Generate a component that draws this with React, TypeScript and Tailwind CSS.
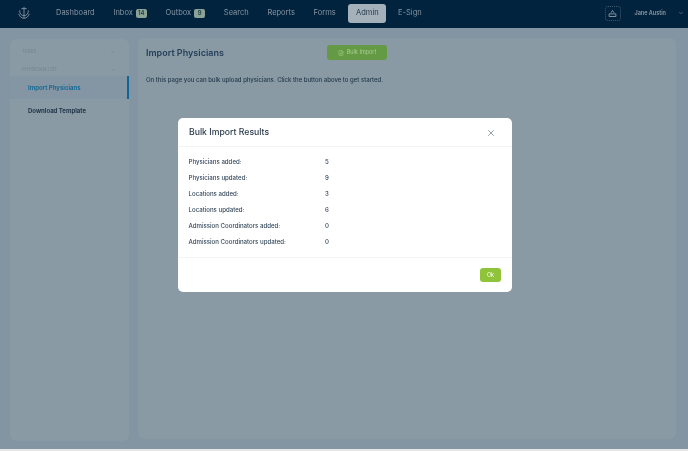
import { ChevronDown, ChevronUp, FileUp, X } from "lucide-react";

const FONT = "font-['Inter','Noto_Sans',sans-serif]";

const resultados = [
  { label: "Physicians added:", valor: 5 },
  { label: "Physicians updated:", valor: 9 },
  { label: "Locations added:", valor: 3 },
  { label: "Locations updated:", valor: 6 },
  { label: "Admission Coordinators added:", valor: 0 },
  { label: "Admission Coordinators updated:", valor: 0 },
];

function NavItem({ label, badge, active }: { label: string; badge?: number; active?: boolean }) {
  if (active) {
    return (
      <span className="flex h-[19px] w-[38px] items-center justify-center rounded-[3px] bg-[#a5b1ba] text-[7.5px] text-[#22394c]">
        {label}
      </span>
    );
  }
  return (
    <span className="flex items-center gap-[3px] text-[7.5px] leading-[12px] text-[#8595a3]">
      {label}
      {badge !== undefined && (
        <span className="flex h-[9px] w-[11px] items-center justify-center rounded-[2px] bg-[#8ba394] text-[6px] font-semibold text-[#20404a]">
          {badge}
        </span>
      )}
    </span>
  );
}

function Header() {
  return (
    <header className="flex h-[28px] items-center bg-[#02233d] pb-[2px] pr-[3px]">
      <svg viewBox="0 0 16 16" className="ml-[17px] h-[14px] w-[14px] text-[#7f8f9c]" fill="none" stroke="currentColor">
        <path d="M8 1v13M3 5c0 4 2 6 5 6s5-2 5-6M2 9c1 3 3 5 6 5s5-2 6-5M5 3h6" strokeWidth="1.1" />
      </svg>
      <nav className="ml-[25px] flex items-center gap-[18.7px]">
        <NavItem label="Dashboard" />
        <NavItem label="Inbox" badge={14} />
        <NavItem label="Outbox" badge={9} />
        <NavItem label="Search" />
        <NavItem label="Reports" />
        <NavItem label="Forms" />
        <div className="-ml-[6px] -mr-[7px]">
          <NavItem label="Admin" active />
        </div>
        <NavItem label="E-Sign" />
      </nav>
      <div className="ml-auto flex items-center">
        <span className="flex h-[15px] w-[16px] items-center justify-center rounded-[3px] border border-dotted border-[#3f5a70]">
          <svg viewBox="0 0 12 12" className="h-[9px] w-[9px] text-[#8e9ca8]" fill="none" stroke="currentColor" strokeWidth="1.2">
            <path d="M4 5l2-3 2 3M1.5 6.5h9v3.5h-9z" />
          </svg>
        </span>
        <span className="ml-[14px] text-[5.5px] font-semibold text-[#8e9ca8]">Jane Austin</span>
        <ChevronDown size={6} className="ml-[12px] mr-[1px] text-[#8e9ca8]" />
      </div>
    </header>
  );
}

function Sidebar() {
  return (
    <aside className="flex h-[402px] w-[119px] shrink-0 flex-col rounded-[6px] bg-[#8a9aa4] pt-[3px]">
      <div className="flex h-[20px] items-center justify-between pl-[12px] pr-[13px] text-[#748591]">
        <span className="text-[4.5px]">TASKS</span>
        <ChevronUp size={6} />
      </div>
      <div className="mt-[2px] flex h-[12px] items-center justify-between pl-[12px] pr-[13px] text-[#748591]">
        <span className="text-[4.5px]">PHYSICIAN LIST</span>
        <ChevronDown size={6} />
      </div>
      <div className="flex h-[23px] items-center border-r-[2px] border-[#0f6496] bg-[#8496a3] pl-[18px] text-[6px] font-bold text-[#196a96]">
        Import Physicians
      </div>
      <div className="flex h-[23px] items-center pl-[18px] text-[6px] font-bold text-[#1e3348]">
        Download Template
      </div>
    </aside>
  );
}

function Modal() {
  return (
    <div className="absolute left-[178px] top-[118px] flex h-[174px] w-[334px] flex-col rounded-[5px] bg-white text-[#33475a]">
      <div className="flex h-[29px] shrink-0 items-center justify-between border-b border-[#f3f4f5] pl-[11px] pr-[16px] pt-[1px]">
        <span className="text-[8.7px] font-medium text-[#2a3a4a]">Bulk Import Results</span>
        <X size={10} className="text-[#7d8a94]" />
      </div>
      <div className="flex flex-1 flex-col pl-[10.5px] pt-[6.5px]">
        {resultados.map((r) => (
          <div key={r.label} className="flex h-[16px] items-center text-[6.1px] font-medium">
            <span className="w-[136.5px]">{r.label}</span>
            <span>{r.valor}</span>
          </div>
        ))}
      </div>
      <div className="flex h-[35px] shrink-0 items-center justify-end border-t border-[#f3f4f5] pr-[11px]">
        <span className="flex h-[14px] w-[21px] items-center justify-center rounded-[3px] bg-[#8fc43a] text-[5.5px] text-white">
          Ok
        </span>
      </div>
    </div>
  );
}

export default function App() {
  return (
    <div className={`${FONT} relative h-[451px] w-[688px] overflow-hidden bg-[#e4e6e8] blur-[0.5px]`}>
      <div className="h-[449px] bg-[#8394a3]">
        <Header />
        <div className="flex gap-[9px] pl-[10px] pt-[11px]">
          <Sidebar />
          <main className="-mt-[1px] h-[401px] w-[538px] rounded-[6px] bg-[#8a9aa4] pl-[8px]">
            <div className="flex h-[29px] items-center">
              <h1 className="w-[181px] text-[9px] font-semibold text-[#24405a]">Import Physicians</h1>
              <span className="flex h-[15px] w-[60px] items-center justify-center gap-[3px] rounded-[3px] bg-[#659a45] text-[5.5px] text-[#a9cd92]">
                <FileUp size={6} />
                Bulk Import
              </span>
            </div>
            <p className="mt-[7px] text-[6px] font-medium leading-[12px] text-[#22394c]">
              On this page you can bulk upload physicians. Click the button above to get started.
            </p>
          </main>
        </div>
      </div>
      <Modal />
    </div>
  );
}
